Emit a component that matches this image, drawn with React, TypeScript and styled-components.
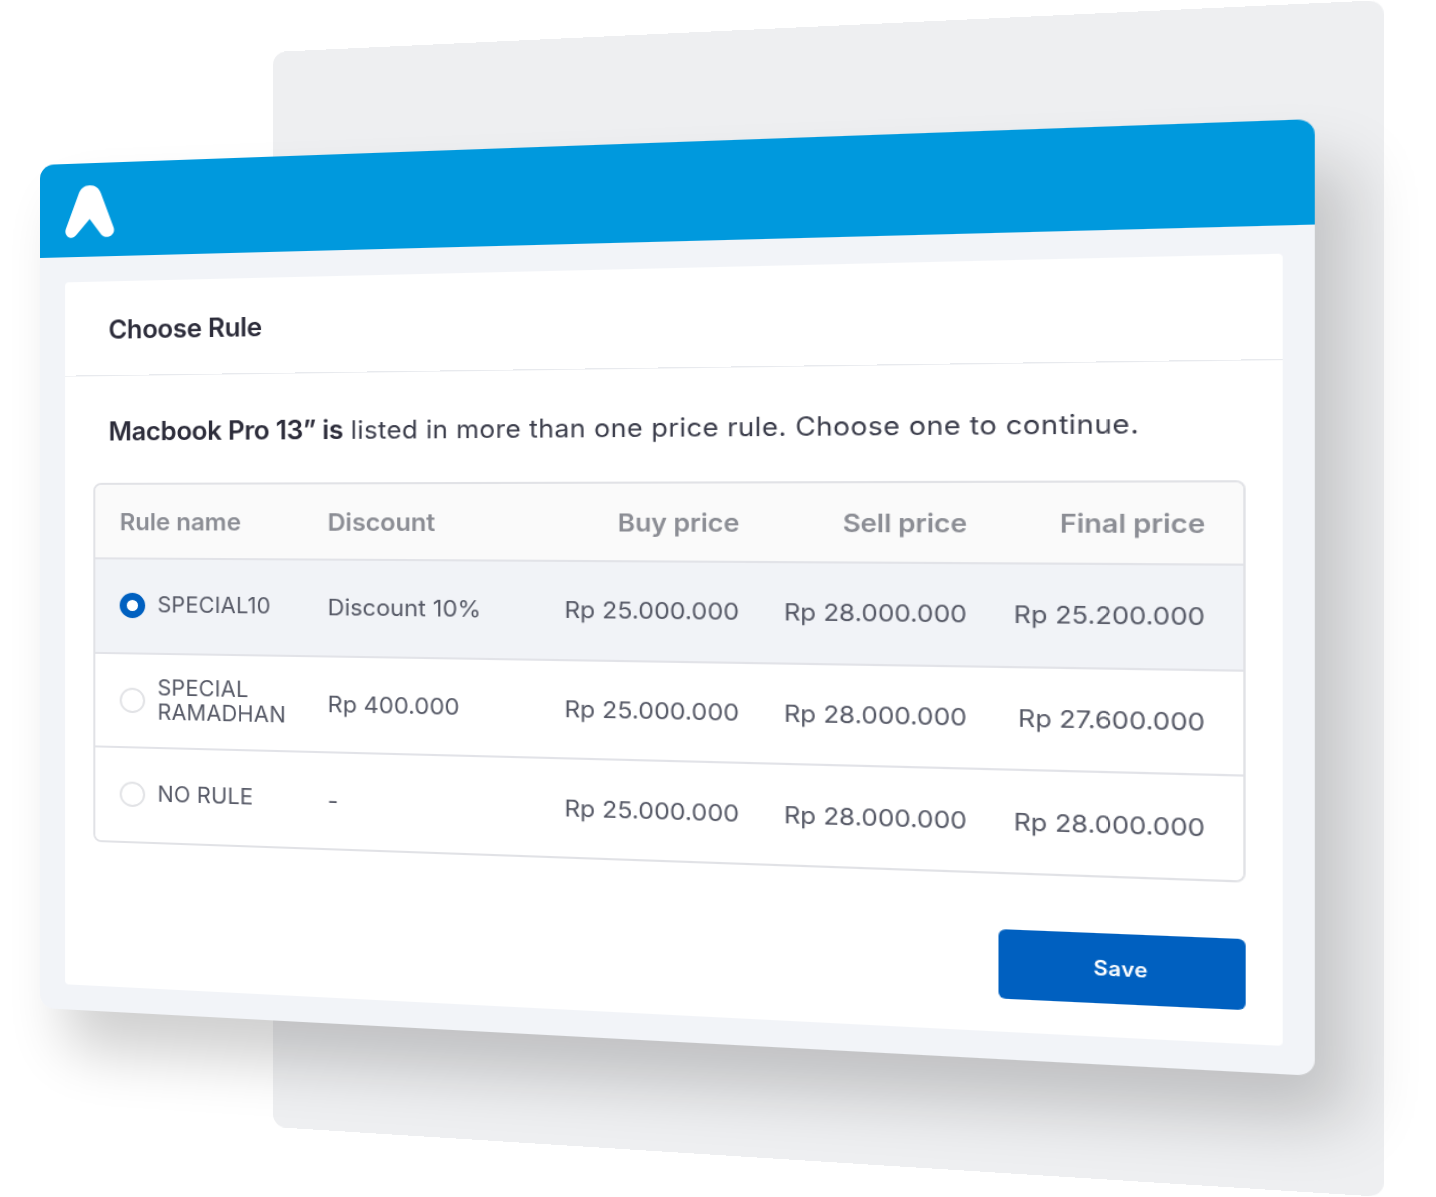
import React from "react";
import styled, { createGlobalStyle } from "styled-components";

type Point = [number, number];

// Homography taking a flat W x H rectangle onto the quad seen in the picture.
function perspective(w: number, h: number, q: [Point, Point, Point, Point]): string {
  const [[x0, y0], [x1, y1], [x2, y2], [x3, y3]] = q;
  const sx = x0 - x1 + x2 - x3;
  const sy = y0 - y1 + y2 - y3;
  const dx1 = x1 - x2;
  const dx2 = x3 - x2;
  const dy1 = y1 - y2;
  const dy2 = y3 - y2;
  const det = dx1 * dy2 - dx2 * dy1;
  const g = (sx * dy2 - dx2 * sy) / det;
  const k = (dx1 * sy - sx * dy1) / det;
  const a = x1 - x0 + g * x1;
  const b = x3 - x0 + k * x3;
  const d = y1 - y0 + g * y1;
  const e = y3 - y0 + k * y3;
  return `matrix3d(${[
    a / w, d / w, 0, g / w,
    b / h, e / h, 0, k / h,
    0, 0, 1, 0,
    x0, y0, 0, 1,
  ].join(",")})`;
}

const Global = createGlobalStyle`
  html, body { margin: 0; padding: 0; background: #fff; }
  body { font-family: Inter, "Noto Sans", "Liberation Sans", sans-serif; }
`;

const Canvas = styled.div`
  position: relative;
  width: 1436px;
  height: 1197px;
  overflow: hidden;
  background: #fff;
`;

const Sheet = styled.div`
  position: absolute;
  top: 0;
  left: 0;
  transform-origin: 0 0;
  box-sizing: border-box;
`;

const BackPanel = styled(Sheet)`
  width: 1000px;
  height: 1075px;
  background: #eeeff1;
  border-radius: 13px;
`;

const Window = styled(Sheet)`
  width: 1123px;
  height: 843px;
  background: #f2f4f8;
  border-radius: 14px;
  box-shadow: 26px 40px 56px rgba(0, 0, 0, 0.19);
  display: flex;
  flex-direction: column;
`;

const TopBar = styled.header`
  height: 93px;
  flex: none;
  background: #0099dd;
  border-radius: 14px 14px 0 0;
  padding: 22px 0 0 25px;
  box-sizing: border-box;
`;

const Card = styled.section`
  margin: 25px;
  flex: 1;
  background: #fff;
  border-radius: 4px;
  display: flex;
  flex-direction: column;
`;

const CardHead = styled.div`
  height: 94px;
  flex: none;
  box-sizing: border-box;
  padding: 3px 43px 0;
  display: flex;
  align-items: center;
  border-bottom: 1px solid #e8eaee;
  font-size: 25px;
  font-weight: 600;
  letter-spacing: -0.3px;
  color: #2c2c3a;
`;

const CardBody = styled.div`
  flex: 1;
  padding: 36px 29px 30px 28px;
  display: flex;
  flex-direction: column;
`;

const Message = styled.p`
  margin: 0 0 32px;
  padding: 0 15px;
  height: 38px;
  line-height: 38px;
  font-size: 24px;
  letter-spacing: 0.35px;
  color: #3a3c4a;
  white-space: nowrap;

  strong {
    font-size: 25px;
    font-weight: 600;
    letter-spacing: -0.3px;
    color: #2c2c3a;
  }
`;

const Table = styled.div`
  height: 357px;
  box-sizing: border-box;
  border: 2px solid #e1e2e6;
  border-radius: 8px;
  overflow: hidden;
  display: flex;
  flex-direction: column;
`;

const Row = styled.div<{ $head?: boolean; $active?: boolean }>`
  flex: ${(p) => (p.$head ? "none" : 1)};
  height: ${(p) => (p.$head ? "74px" : "auto")};
  box-sizing: border-box;
  display: grid;
  grid-template-columns: 200px 140px 232px 193px 193px;
  align-items: center;
  padding: 0 31px ${(p) => (p.$head ? 0 : "1px")} 24px;
  background: ${(p) => (p.$head ? "#fafafa" : p.$active ? "#f1f3f7" : "#fff")};
  color: ${(p) => (p.$head ? "#8b8d94" : "#565966")};
  font-size: ${(p) => (p.$head ? "23.5px" : "22px")};
  font-weight: ${(p) => (p.$head ? 600 : 400)};
  letter-spacing: ${(p) => (p.$head ? "-0.1px" : "0")};
  white-space: nowrap;
  border-bottom: 2px solid #e2e3e8;

  &:last-child {
    border-bottom: 0;
  }
`;

const NameCell = styled.div`
  display: flex;
  align-items: center;
  gap: 12px;
`;

const Radio = styled.span<{ $on?: boolean }>`
  flex: none;
  width: 25px;
  height: 25px;
  box-sizing: border-box;
  border-radius: 50%;
  background: #fff;
  border: ${(p) => (p.$on ? "7px solid #0060c0" : "2px solid #e2e3e6")};
`;

const NameText = styled.span`
  font-size: 21px;
  line-height: 24.5px;
  letter-spacing: 0.15px;
  white-space: normal;
  width: 150px;
`;

const Price = styled.div`
  text-align: right;
  white-space: nowrap;
`;

const Footer = styled.div`
  flex: 1;
  display: flex;
  justify-content: flex-end;
  align-items: flex-end;
`;

const SaveButton = styled.button`
  width: 199px;
  height: 63px;
  border: 0;
  border-radius: 6px;
  background: #0060c0;
  color: #fff;
  font: 600 18px Inter, "Noto Sans", sans-serif;
  letter-spacing: 0.3px;
`;

const rows = [
  { name: "SPECIAL10", discount: "Discount 10%", final: "Rp 25.200.000", on: true },
  { name: "SPECIAL RAMADHAN", discount: "Rp 400.000", final: "Rp 27.600.000" },
  { name: "NO RULE", discount: "-", final: "Rp 28.000.000" },
];

const Logo = () => (
  <svg width="49" height="52" viewBox="0 0 49 52" aria-hidden="true">
    <path
      fill="#fff"
      d="M24.4 0C30 0 33.6 3 35.4 8L48 42.5C49.8 47.4 46 51.8 41.4 51.8C39.2 51.8 37.6 51 36 49.4L24.4 33.6L11.4 48.8C9.8 50.8 8 51.8 6.4 51.8C2 51.8 -1 47 .9 42.4L13.6 8C15.4 3 19 0 24.4 0Z"
    />
  </svg>
);

export default function App() {
  return (
    <Canvas>
      <Global />
      <BackPanel
        style={{
          transform: perspective(1000, 1075, [
            [273, 52],
            [1384, 0],
            [1384, 1197],
            [273, 1127],
          ]),
        }}
      />
      <Window
        style={{
          transform: perspective(1123, 843, [
            [40, 165],
            [1315, 119],
            [1315, 1076],
            [40, 1008],
          ]),
        }}
      >
        <TopBar>
          <Logo />
        </TopBar>
        <Card>
          <CardHead>Choose Rule</CardHead>
          <CardBody>
            <Message>
              <strong>Macbook Pro 13” is</strong> listed in more than one price rule. Choose one to continue.
            </Message>
            <Table>
              <Row $head>
                <div>Rule name</div>
                <div>Discount</div>
                <Price>Buy price</Price>
                <Price>Sell price</Price>
                <Price>Final price</Price>
              </Row>
              {rows.map((r) => (
                <Row key={r.name} $active={r.on}>
                  <NameCell>
                    <Radio $on={r.on} />
                    <NameText>{r.name}</NameText>
                  </NameCell>
                  <div>{r.discount}</div>
                  <Price>Rp 25.000.000</Price>
                  <Price>Rp 28.000.000</Price>
                  <Price>{r.final}</Price>
                </Row>
              ))}
            </Table>
            <Footer>
              <SaveButton>Save</SaveButton>
            </Footer>
          </CardBody>
        </Card>
      </Window>
    </Canvas>
  );
}
